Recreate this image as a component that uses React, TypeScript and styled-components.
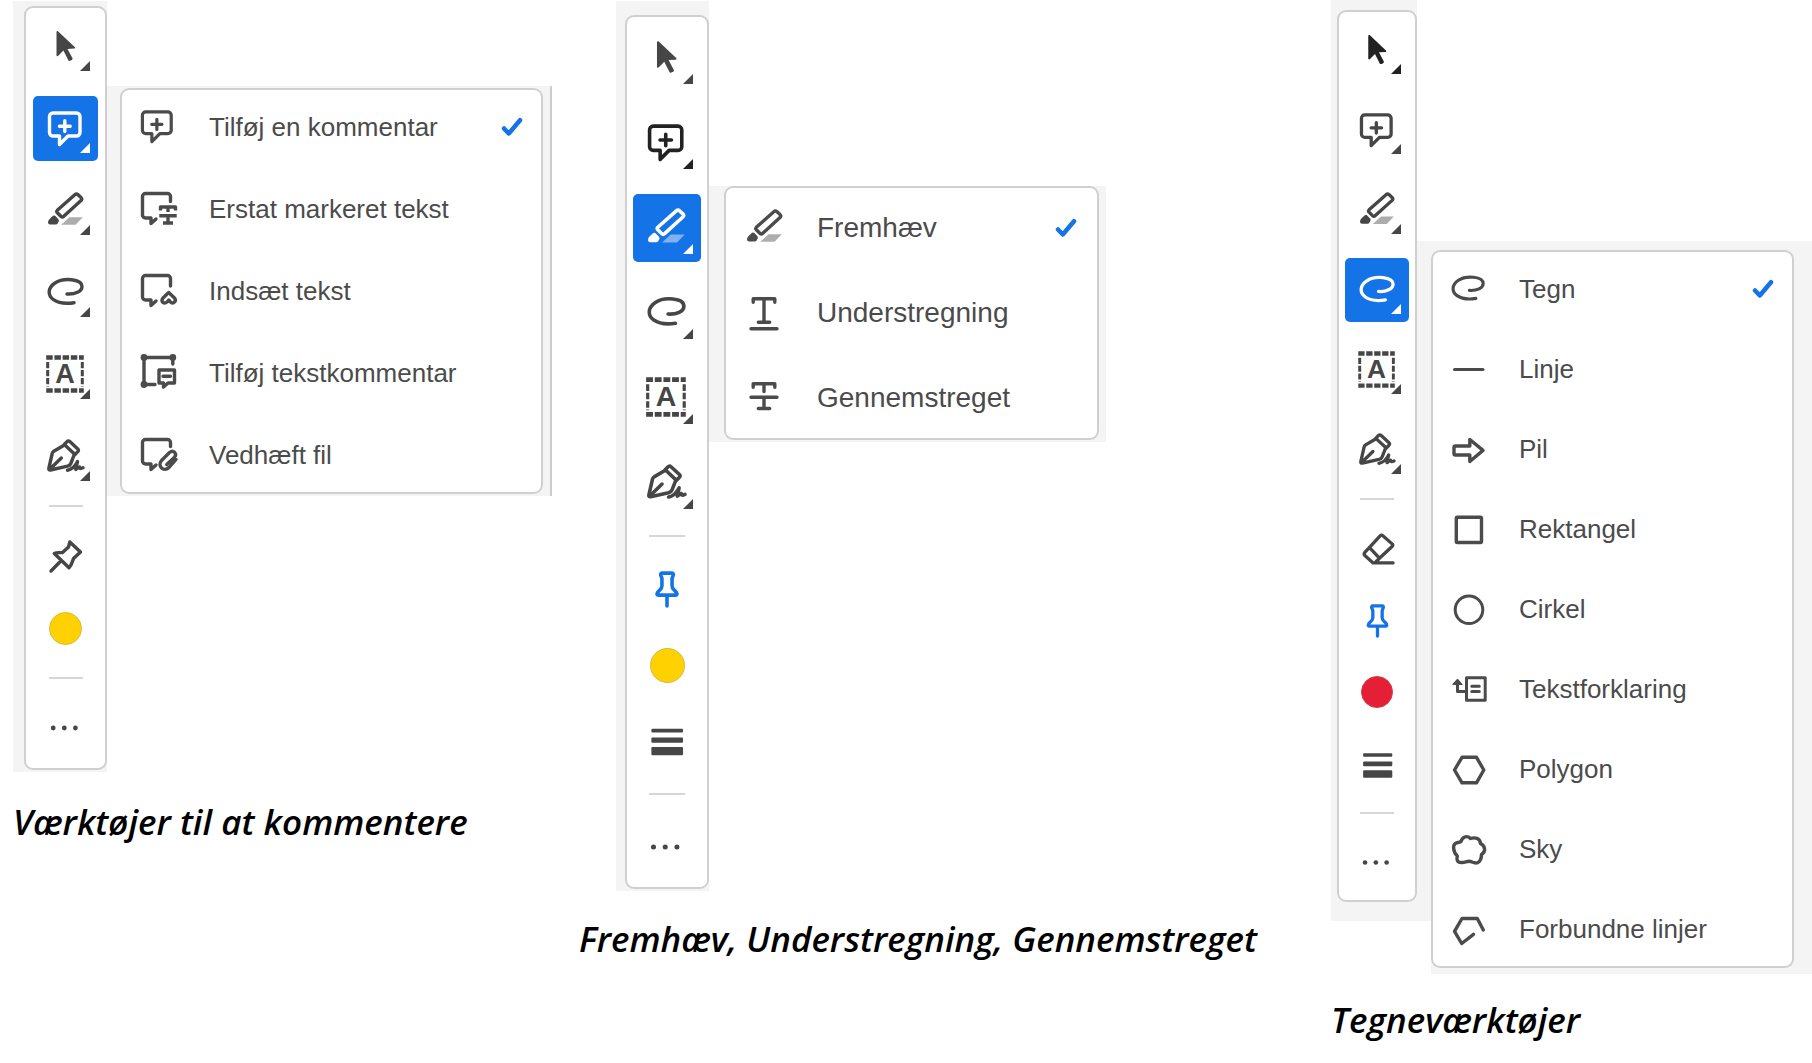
import React from 'react';
import styled, { createGlobalStyle, css, ThemeProvider } from 'styled-components';

const GlobalStyle = createGlobalStyle`
  *, *::before, *::after { box-sizing: border-box; }
  body { margin: 0; background: #ffffff; }
`;

/* ---------- sizes of the three toolbars ---------- */

const commentSizes = {
  indent: 0,
  top: 1,
  barShade: '5px 0 2px 11px',
  barWidth: 83,
  barPadding: '6px 0 8px',
  tool: 65,
  toolGap: 17,
  ruleGap: 16,
  ruleWidth: 34,
  icon: 36,
  swatch: 33,
  bridgeTop: 85,
  bridgeBottom: 276,
  bridgeWidth: 13,
  menuTop: 85,
  menuShade: '2px 9px 2px 0',
  menuEdge: true,
  menuWidth: 423,
  menuPadding: 6,
  rowGap: 16,
  rowIndent: 21,
  rowEnd: 20,
  rowIcon: 34,
  labelGap: 34,
  font: 26,
  captionGap: 26,
};

const markupSizes = {
  indent: 37,
  top: 1,
  barShade: '14px 0 2px 9px',
  barWidth: 84,
  barPadding: '7px 0 6px',
  tool: 68,
  toolGap: 17,
  ruleGap: 18,
  ruleWidth: 36,
  icon: 38,
  swatch: 35,
  bridgeTop: 185,
  bridgeBottom: 449,
  bridgeWidth: 15,
  menuTop: 185,
  menuShade: '0 7px 2px 0',
  menuEdge: false,
  menuWidth: 375,
  menuPadding: 9,
  rowGap: 19,
  rowIndent: 23,
  rowEnd: 22,
  rowIcon: 36,
  labelGap: 34,
  font: 28,
  captionGap: 24,
};

const drawSizes = {
  indent: 0,
  top: 0,
  barShade: '10px 0 19px 6px',
  barWidth: 80,
  barPadding: '6px 0',
  tool: 64,
  toolGap: 16,
  ruleGap: 16,
  ruleWidth: 34,
  icon: 35,
  swatch: 32,
  bridgeTop: 241,
  bridgeBottom: 0,
  bridgeWidth: 14,
  menuTop: 241,
  menuShade: '9px 18px 6px 0',
  menuEdge: false,
  menuWidth: 363,
  menuPadding: 6,
  rowGap: 14,
  rowIndent: 21,
  rowEnd: 20,
  rowIcon: 33,
  labelGap: 34,
  font: 26,
  captionGap: 22,
};

type Sizes = typeof commentSizes;
type Themed = { theme: any };
const t = (key: keyof Sizes) => (p: Themed) => `${p.theme[key]}px`;

/* ---------- layout parts ---------- */

const Page = styled.main`
  display: grid;
  grid-template-columns: 566fr 752fr 481fr;
  align-items: start;
  padding-left: 13px;
`;

const Figure = styled.figure`
  margin: 0;
  padding-top: ${t('top')};
`;

const Caption = styled.figcaption`
  margin-top: ${t('captionGap')};
  font: italic 600 35px/48px 'Open Sans', 'Noto Sans', sans-serif;
  color: #000000;
  white-space: nowrap;
`;

const Panels = styled.div`
  display: flex;
  align-items: flex-start;
  margin-left: ${t('indent')};
`;

const BarSide = styled.div`
  display: flex;
`;

const BarShade = styled.div`
  padding: ${(p: Themed) => p.theme.barShade};
  background: #f4f4f4;
`;

const Bridge = styled.div`
  width: ${t('bridgeWidth')};
  margin: ${t('bridgeTop')} 0 ${t('bridgeBottom')};
  background: #f4f4f4;
`;

const frame = css`
  background: #ffffff;
  border-radius: 9px;
`;

const Bar = styled.div`
  ${frame}
  display: flex;
  flex-direction: column;
  align-items: center;
  width: ${t('barWidth')};
  padding: ${(p: Themed) => p.theme.barPadding};
  border: 2px solid #d0d0d0;
`;

const Group = styled.div<{ $tight?: boolean }>`
  display: flex;
  flex-direction: column;
  gap: ${(p) => (p.$tight ? '8px' : `${(p.theme as any).toolGap}px`)};
`;

const Rule = styled.hr`
  width: ${t('ruleWidth')};
  height: 2px;
  margin: ${t('ruleGap')} 0;
  border: 0;
  background: #d6d6d6;
`;

const ToolButton = styled.button<{ $active?: boolean; $dark?: boolean; $pinned?: boolean; $more?: boolean }>`
  position: relative;
  display: grid;
  place-items: center;
  width: ${t('tool')};
  height: ${t('tool')};
  padding: 0;
  border: 0;
  border-radius: 5px;
  background: ${(p) => (p.$active ? '#1473e6' : 'transparent')};
  color: ${(p) => (p.$active ? '#ffffff' : p.$pinned ? '#1473e6' : p.$dark ? '#222222' : '#464646')};

  ${(p) =>
    p.$more &&
    css`
      &::after {
        content: '';
        position: absolute;
        right: 8px;
        bottom: 8px;
        width: 10px;
        height: 10px;
        background: currentColor;
        clip-path: polygon(100% 0, 100% 100%, 0 100%);
      }
    `}
`;

const ToolIcon = styled.svg`
  width: ${t('icon')};
  height: ${t('icon')};
  overflow: visible;
`;

const Swatch = styled.span<{ $color: string; $edge: string }>`
  width: ${t('swatch')};
  height: ${t('swatch')};
  border: 1px solid ${(p) => p.$edge};
  border-radius: 50%;
  background: ${(p) => p.$color};
`;

const MenuShade = styled.div`
  margin-top: ${t('menuTop')};
  padding: ${(p: Themed) => p.theme.menuShade};
  background: #f4f4f4;
  box-shadow: ${(p: Themed) => (p.theme.menuEdge ? 'inset -2px 0 #cccccc' : 'none')};
`;

const Menu = styled.div`
  ${frame}
  display: flex;
  flex-direction: column;
  gap: ${t('rowGap')};
  width: ${t('menuWidth')};
  padding: ${t('menuPadding')} 0;
  box-shadow: inset 0 0 0 2px #d0d0d0;
`;

const Row = styled.button`
  display: flex;
  align-items: center;
  gap: ${t('labelGap')};
  height: 66px;
  padding: 0 ${t('rowEnd')} 0 ${t('rowIndent')};
  border: 0;
  background: transparent;
  color: #4b4b4b;
  font: 400 ${t('font')} / 32px 'Liberation Sans', Arial, sans-serif;
  text-align: left;
`;

const RowIcon = styled.svg`
  flex: none;
  width: ${t('rowIcon')};
  height: ${t('rowIcon')};
  overflow: visible;
`;

const Label = styled.span`
  flex: 1;
  white-space: nowrap;
`;

const Tick = styled.svg`
  flex: none;
  width: 22px;
  height: 20px;
  color: #1473e6;
`;

/* ---------- drawings ---------- */

const line = {
  fill: 'none',
  stroke: 'currentColor',
  strokeWidth: 3.4,
  strokeLinecap: 'round' as const,
  strokeLinejoin: 'round' as const,
};

const bubble = (end: number) => `M29.5 ${end}V4.5a3 3 0 0 0-3-3H4.5a3 3 0 0 0-3 3V23a3 3 0 0 0 3 3H10v5.5L15 27`;

type Drawing = { box: number; art: React.ReactNode };

const drawings: Record<string, Drawing> = {
  pointer: {
    box: 36,
    art: (
      <path
        fill="currentColor"
        d="M8.5 3c0-1 1-1.3 1.7-.6L26.7 18c.7.7.3 1.6-.6 1.6l-6.6.3 4.9 9.2c.4.8.1 1.5-.6 1.9l-1.7.8c-.8.4-1.5.1-1.9-.7l-4.8-9.5-5.1 5.2c-.7.7-1.8.3-1.8-.6z"
      />
    ),
  },
  comment: {
    box: 36,
    art: (
      <path {...line} d="M5 2h23.5a3.5 3.5 0 0 1 3.5 3.5v16a3.5 3.5 0 0 1-3.5 3.5H20l-8.5 8.5V25H5a3.5 3.5 0 0 1-3.5-3.5v-16A3.5 3.5 0 0 1 5 2zM16.8 9.8v10.8M11.4 15.2h10.8" />
    ),
  },
  highlight: {
    box: 36,
    art: (
      <>
        <path {...line} d="M26.8 1.8q1.5-1.5 3-.2l3.2 3q1.5 1.5 0 3L15.500 23.500q-1.2 1.2-2.4 0l-3.800-3.800q-1.100-1.200 0-2.400z" />
        <path fill="currentColor" d="M5 22.8q1.3-.8 2.4.3l3 3.2q1 1 .2 2.500l-1 1.700q-.6 1-1.900 1H2Q.2 31.500 0 29.600q-.1-2.100 1.600-3.700z" />
        <path fill="currentColor" opacity={0.45} d="M21.5 24.2h13.3l-7.3 7.6H13.2z" />
      </>
    ),
  },
  draw: {
    box: 36,
    art: <path {...line} d="M19 19C27 19.5 34 16.5 34 11.5C34 3.5 15 2.5 7 8C-.5 13-.5 20.5 5.5 24.7C11 28.5 18 29 26 27.7" />,
  },
  textbox: {
    box: 36,
    art: (
      <>
        <g fill="none" stroke="currentColor">
          <path strokeWidth={4.5} strokeDasharray="6.5 1.7" d="M-1.8.5h37.6M-1.8 33.5h37.6" />
          <path strokeWidth={3} strokeDasharray="6.3 1.7" d="M-.3 5v24.5M34.3 5v24.5" />
        </g>
        <text x={17} y={26} textAnchor="middle" fontFamily="'Liberation Sans', Arial, sans-serif" fontWeight={700} fontSize={27} fill="currentColor">
          A
        </text>
      </>
    ),
  },
  sign: {
    box: 36,
    art: (
      <>
        <path {...line} d="M16 6.2L5.800 12.200Q4.600 13 4.200 14.500L.8 29.500Q.5 31.300 2.500 31L19.500 27.200Q22 26.500 22.800 24.500L26.300 15.500M1.500 30.500L13.300 19" />
        <path {...line} d="M18.800 2.800Q20.300 1.200 21.800 2.600L29.800 10Q31 11.200 29.800 12.600L27 15.500L16.300 5.500z" />
        <path {...line} d="M19.500 31.200C24 30.500 27.500 26.500 29.500 22.500C29 25.500 28 28 27.800 30.500Q30 28.500 31.500 28Q31.200 30.500 35 28.800" />
      </>
    ),
  },
  unpinned: {
    box: 36,
    art: <path {...line} d="M21.8 4L32.5 14L25.5 20.500C24.500 23 24 27 21 29.800L6.300 15.500C9 14 12.500 15 14.500 14.500L20.500 9zM12.800 23L3 33" />,
  },
  pinned: {
    box: 36,
    art: <path {...line} d="M12.800 3h10.400q1.500.5.300 3L22.800 8v7q0 2.500 2 4l2.200 2.300q1.300 2.500-1 2.500H10q-2.300 0-1-2.500L11.200 19q2-1.500 2-4V8L12.500 6q-1.200-2.500.3-3zM18 24v10" />,
  },
  eraser: {
    box: 36,
    art: <path {...line} d="M34 32.800H13.500L5 25.300Q3.500 23.800 5 22L20.700 5Q22 3.600 23.500 4.900L33.300 13.500Q34.200 14.500 33.200 15.700L19.500 28.600L15.500 32.500M9.800 17L20 28" />,
  },
  weight: {
    box: 36,
    art: (
      <g fill="currentColor">
        <rect x={3.2} y={6.5} width={30} height={3.4} rx={1} />
        <rect x={3.2} y={14.8} width={30} height={4.9} rx={1} />
        <rect x={3.2} y={23.8} width={30} height={7.8} rx={1} />
      </g>
    ),
  },
  more: {
    box: 36,
    art: (
      <g fill="currentColor">
        <circle cx={5.2} cy={18} r={2.4} />
        <circle cx={16.3} cy={18} r={2.4} />
        <circle cx={27.4} cy={18} r={2.4} />
      </g>
    ),
  },
  replace: {
    box: 34,
    art: (
      <>
        <path {...line} d={bubble(9.5)} />
        <path {...line} strokeLinecap="butt" d="M19.5 18.5v-3.5h15v3.5M27 15v5M18.3 23.7h17.4M27 23.7v7.3M22 31h10" />
      </>
    ),
  },
  insert: {
    box: 34,
    art: (
      <>
        <path {...line} d={bubble(12)} />
        <path {...line} d="M27.7 18.5L33.5 24Q35.5 26.5 33 28.5Q31 29.5 29.5 28L27.7 26L26 28Q24 29.7 22 28.5Q20 26.5 22 24z" />
      </>
    ),
  },
  textNote: {
    box: 34,
    art: (
      <>
        <path {...line} d="M31.8 8V1.500H3V28.500H14M18 14h15.500v13H27l-4.500 4V27H18zM22 20.300h7.500" />
        <g fill="currentColor">
          <circle cx={3} cy={1.5} r={3.4} />
          <circle cx={31.8} cy={1.5} r={3.4} />
          <circle cx={3} cy={28.5} r={3.4} />
        </g>
      </>
    ),
  },
  attach: {
    box: 34,
    art: (
      <>
        <path {...line} d={bubble(8.5)} />
        <path {...line} d="M35 21.5L28 29.5C22.5 34.5 16 28 20.5 22.5L28.5 14.5C32.5 11.5 36.5 15.5 33.5 19.3L25.8 26.5" />
      </>
    ),
  },
  underline: {
    box: 36,
    art: <path {...line} d="M6.2 7.3V3.7h21.6v3.6M17 3.7V27M11.3 27.3h11.4M4 33.8h26" />,
  },
  strike: {
    box: 36,
    art: <path {...line} d="M6.2 7.3V3.7h21.6v3.6M17 3.7V11.5M4 17.2h26M17 17.2V28.5M11.3 28.5h11.4" />,
  },
  rule: { box: 33, art: <path {...line} strokeWidth={3} d="M2.5 16.5h28.5" /> },
  arrow: { box: 33, art: <path {...line} d="M3.5 13H17.8V6.5L31 17.4L17.8 28.5V22H3.5Q2 22 2 20.5V14.5Q2 13 3.5 13z" /> },
  rectangle: { box: 33, art: <rect {...line} x={4.3} y={4.3} width={25.2} height={25.2} rx={1} /> },
  circle: { box: 33, art: <circle {...line} strokeWidth={3} cx={17} cy={16.8} r={13.8} /> },
  callout: {
    box: 33,
    art: (
      <>
        <path {...line} strokeWidth={3} d="M14.5 4.7h18.7v22.6H14.5zM19.8 13.2h7.5M19.8 18.5h7.5M14 18.5H5.500V10" />
        <path fill="currentColor" d="M5.5 6q.8 0 1.4.9l3.5 4.1q.6 1-.6 1H1q-1.2 0-.6-1l3.7-4.1Q4.7 6 5.5 6z" />
      </>
    ),
  },
  polygon: { box: 33, art: <path {...line} d="M10 4.3h14.5L31.8 17L24.5 29.8H10L2.5 17z" /> },
  cloud: {
    box: 33,
    art: <path {...line} d="M9 8.5C10.5 3 15.5 2.5 18.5 5.5C23 4 28 5 28.5 10.5C33.5 13 34 19 29.5 21.5C29.5 27.5 26.5 32 20 29C16 27 14 29.5 10 29.5C5 30 4.500 26.500 5.300 23C1 19 .5 12 3.500 10.500C5 9.300 7 9.800 9 8.500z" />,
  },
  polyline: { box: 33, art: <path {...line} d="M31.3 17L25.3 5.5H10L2.5 18.3L9.7 30.5L21.5 21.3" /> },
};

const Art = ({ name, as: Svg }: { name: string; as: React.ElementType }) => {
  const { box, art } = drawings[name];
  return (
    <Svg viewBox={`0 0 ${box} ${box}`} aria-hidden="true">
      {art}
    </Svg>
  );
};

/* ---------- data ---------- */

const mainTools = [
  ['pointer', 'Vælg'],
  ['comment', 'Tilføj kommentar'],
  ['highlight', 'Fremhæv'],
  ['draw', 'Tegn'],
  ['textbox', 'Tekst'],
  ['sign', 'Underskriv'],
];

const extraLabels: Record<string, string> = {
  unpinned: 'Fastgør',
  pinned: 'Frigør',
  eraser: 'Viskelæder',
  weight: 'Stregtykkelse',
  yellow: 'Gul farve',
  red: 'Rød farve',
};

const swatches: Record<string, [string, string]> = {
  yellow: ['#ffd100', '#d9ba3c'],
  red: ['#e41f36', '#d83a4b'],
};

type Panel = {
  caption: string;
  sizes: Sizes;
  active: string;
  dark?: string;
  extras: string[];
  rows: [string, string][];
};

const panels: Panel[] = [
  {
    caption: 'Værktøjer til at kommentere',
    sizes: commentSizes,
    active: 'comment',
    extras: ['unpinned', 'yellow'],
    rows: [
      ['comment', 'Tilføj en kommentar'],
      ['replace', 'Erstat markeret tekst'],
      ['insert', 'Indsæt tekst'],
      ['textNote', 'Tilføj tekstkommentar'],
      ['attach', 'Vedhæft fil'],
    ],
  },
  {
    caption: 'Fremhæv, Understregning, Gennemstreget',
    sizes: markupSizes,
    active: 'highlight',
    dark: 'comment',
    extras: ['pinned', 'yellow', 'weight'],
    rows: [
      ['highlight', 'Fremhæv'],
      ['underline', 'Understregning'],
      ['strike', 'Gennemstreget'],
    ],
  },
  {
    caption: 'Tegneværktøjer',
    sizes: drawSizes,
    active: 'draw',
    dark: 'pointer',
    extras: ['eraser', 'pinned', 'red', 'weight'],
    rows: [
      ['draw', 'Tegn'],
      ['rule', 'Linje'],
      ['arrow', 'Pil'],
      ['rectangle', 'Rektangel'],
      ['circle', 'Cirkel'],
      ['callout', 'Tekstforklaring'],
      ['polygon', 'Polygon'],
      ['cloud', 'Sky'],
      ['polyline', 'Forbundne linjer'],
    ],
  },
];

const ToolPanel = ({ panel }: { panel: Panel }) => (
  <ThemeProvider theme={panel.sizes}>
    <Figure>
      <Panels>
        <BarSide>
          <BarShade>
            <Bar role="toolbar" aria-orientation="vertical" aria-label={panel.caption}>
              <Group>
                {mainTools.map(([name, label]) => (
                  <ToolButton
                    key={name}
                    type="button"
                    aria-label={label}
                    aria-pressed={name === panel.active}
                    $more
                    $active={name === panel.active}
                    $dark={name === panel.dark}
                  >
                    <Art name={name} as={ToolIcon} />
                  </ToolButton>
                ))}
              </Group>
              <Rule />
              <Group $tight>
                {panel.extras.map((name) => (
                  <ToolButton key={name} type="button" aria-label={extraLabels[name]} $pinned={name === 'pinned'}>
                    {swatches[name] ? (
                      <Swatch $color={swatches[name][0]} $edge={swatches[name][1]} />
                    ) : (
                      <Art name={name} as={ToolIcon} />
                    )}
                  </ToolButton>
                ))}
              </Group>
              <Rule />
              <ToolButton type="button" aria-label="Mere">
                <Art name="more" as={ToolIcon} />
              </ToolButton>
            </Bar>
          </BarShade>
          <Bridge />
        </BarSide>
        <MenuShade>
          <Menu role="menu">
            {panel.rows.map(([name, label], i) => (
              <Row key={name} type="button" role="menuitemradio" aria-checked={i === 0}>
                <Art name={name} as={RowIcon} />
                <Label>{label}</Label>
                {i === 0 && (
                  <Tick viewBox="0 0 22 20" aria-hidden="true">
                    <path {...line} strokeWidth={4.5} d="M3 11.5l4.8 5L19 3.2" />
                  </Tick>
                )}
              </Row>
            ))}
          </Menu>
        </MenuShade>
      </Panels>
      <Caption>{panel.caption}</Caption>
    </Figure>
  </ThemeProvider>
);

export default function App() {
  return (
    <>
      <GlobalStyle />
      <Page>
        {panels.map((panel) => (
          <ToolPanel key={panel.active} panel={panel} />
        ))}
      </Page>
    </>
  );
}
